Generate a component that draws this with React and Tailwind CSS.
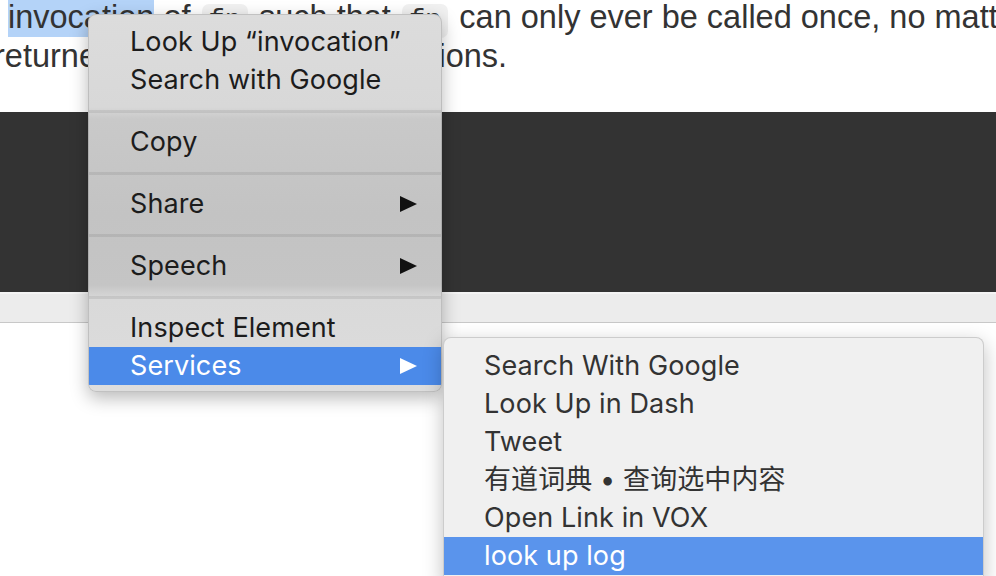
import React from 'react';

const Arrow = ({ white }) => (
  <svg width="17" height="16" viewBox="0 0 17 16" className="shrink-0">
    <polygon points="0,0 17,8 0,16" fill={white ? '#ffffff' : '#111111'} />
  </svg>
);

const MenuRow = ({ label, arrow, active }) => (
  <div
    className={`h-[38px] flex items-center justify-between pl-[41px] pr-[24px] ${
      active ? 'bg-[#4b8ae9] text-white' : 'text-[#1c1c1c]'
    }`}
  >
    <span>{label}</span>
    {arrow && <Arrow white={active} />}
  </div>
);

const Separator = () => (
  <div className="h-[24px] flex items-center">
    <div className="h-[3px] w-full bg-black/[0.075]" />
  </div>
);

const Code = ({ children }) => (
  <span className="mx-[2px] px-[7px] py-[2px] rounded-[7px] bg-[#f1f1f1] text-[#333] font-['Liberation_Mono',monospace] text-[27px]">
    {children}
  </span>
);

const services = [
  'Search With Google',
  'Look Up in Dash',
  'Tweet',
  '有道词典 • 查询选中内容',
  'Open Link in VOX',
  'look up log',
];

export default function App() {
  return (
    <div className="relative w-[996px] h-[576px] overflow-hidden bg-white">
      {/* page text */}
      <div className="h-[112px] font-['Liberation_Sans',Arial,sans-serif] text-[32.5px] leading-[35px] text-[#333] whitespace-nowrap">
        <p className="pl-[8px]">
          <span className="bg-[#b4d3f8] pb-[2px]">invocation</span> of <Code>fn</Code> such that <Code>fn</Code> can only ever be called once, no matter how many times the
        </p>
        <p className="-ml-[6px]">returned in subsequent invocations.</p>
      </div>

      {/* dark code block */}
      <div className="h-[180px] bg-[#333333]" />
      <div className="h-[2px] bg-[#f4f4f4]" />
      <div className="h-[29px] bg-[#ececec] border-b border-[#c8c8c8]" />

      {/* context menu */}
      <div className="absolute left-[88px] top-[14px] w-[354px] h-[378px] py-[8px] rounded-[8px] overflow-hidden border border-black/[0.12] bg-[linear-gradient(to_bottom,#dcdcdc_0px,#d8d8d8_92px,#c9c9c9_104px,#c3c3c3_200px,#c5c5c5_270px,#d9d9d9_284px,#dddddd_100%)] shadow-[0_6px_18px_rgba(0,0,0,0.28)] font-['Inter','Noto_Sans',sans-serif] text-[27px] tracking-[0.1px]">
        <MenuRow label="Look Up “invocation”" />
        <MenuRow label="Search with Google" />
        <Separator />
        <MenuRow label="Copy" />
        <Separator />
        <MenuRow label="Share" arrow />
        <Separator />
        <MenuRow label="Speech" arrow />
        <Separator />
        <MenuRow label="Inspect Element" />
        <MenuRow label="Services" arrow active />
      </div>

      {/* services submenu */}
      <div className="absolute left-[443px] top-[337px] w-[541px] h-[248px] pt-[9px] rounded-[8px] border border-black/[0.15] bg-[#f0f0f0] shadow-[0_6px_20px_rgba(0,0,0,0.25)] font-['Inter','Noto_Sans_CJK_SC',sans-serif] text-[27px] tracking-[0.1px]">
        {services.map((s, i) => (
          <div
            key={s}
            className={`h-[38px] flex items-center pl-[40px] ${
              i === services.length - 1 ? 'bg-[#5a94ec] text-white' : 'text-[#333]'
            }`}
          >
            {s}
          </div>
        ))}
      </div>
    </div>
  );
}
